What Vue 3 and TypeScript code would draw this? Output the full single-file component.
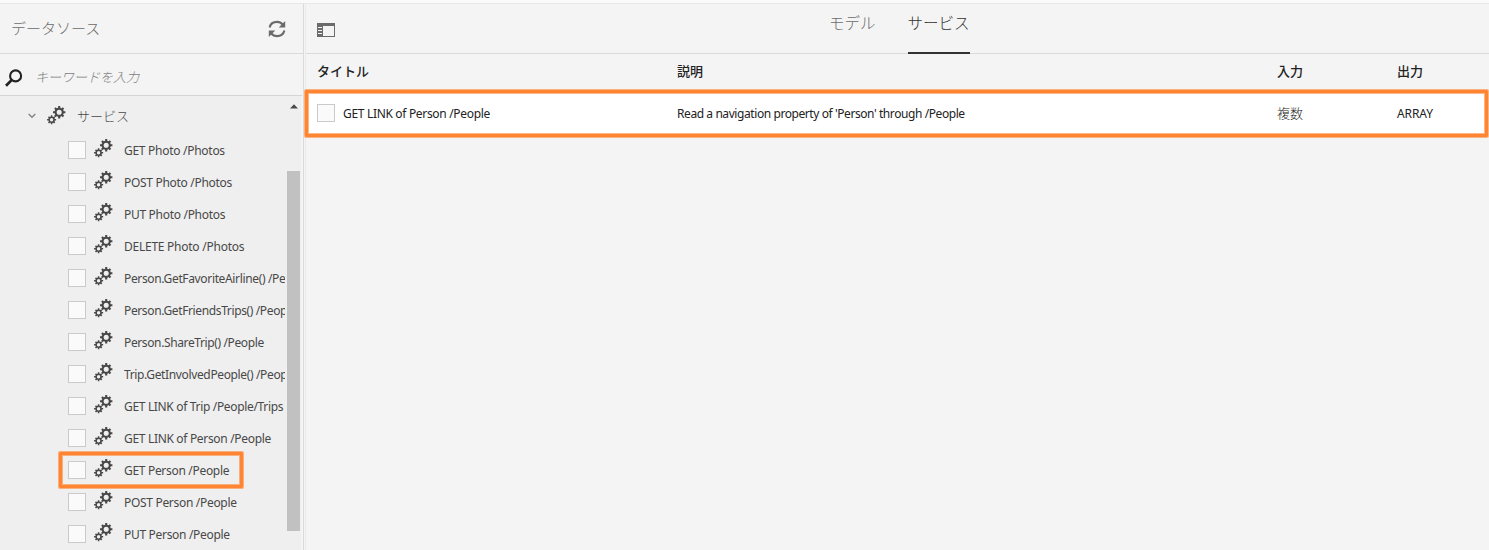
<script setup lang="ts">
interface ServiceItem {
  label: string
  tracking: number
  marked?: boolean
}

const services: ServiceItem[] = [
  { label: 'GET Photo /Photos', tracking: -0.28 },
  { label: 'POST Photo /Photos', tracking: -0.3 },
  { label: 'PUT Photo /Photos', tracking: -0.3 },
  { label: 'DELETE Photo /Photos', tracking: -0.25 },
  { label: 'Person.GetFavoriteAirline() /People', tracking: -0.35 },
  { label: 'Person.GetFriendsTrips() /People', tracking: -0.37 },
  { label: 'Person.ShareTrip() /People', tracking: -0.38 },
  { label: 'Trip.GetInvolvedPeople() /People', tracking: -0.36 },
  { label: 'GET LINK of Trip /People/Trips', tracking: -0.33 },
  { label: 'GET LINK of Person /People', tracking: -0.32 },
  { label: 'GET Person /People', tracking: -0.31, marked: true },
  { label: 'POST Person /People', tracking: -0.31 },
  { label: 'PUT Person /People', tracking: -0.31 },
]
</script>

<template>
  <div class="app">
    <svg class="defs" width="0" height="0" aria-hidden="true">
      <symbol id="gears" viewBox="0 0 20 20">
        <g fill="none" stroke="#484848">
          <circle cx="12.2" cy="6.3" r="3.6" stroke-width="2.1" />
          <path
            stroke-width="2.1"
            d="M12.2 2.8V.1M12.2 9.8v2.700M8.700 6.300H6M15.700 6.300h2.700M9.700 3.800 7.900 2M14.700 8.800l1.800 1.800M9.700 8.800l-1.800 1.800M14.700 3.800 16.500 2"
          />
          <circle cx="4.600" cy="13.800" r="2.450" stroke-width="1.500" />
          <path
            stroke-width="1.500"
            d="M4.600 11.500V9.300M4.600 16.100v2.200M2.300 13.800H.1M6.900 13.800h2.200M3 12.200l-1.500-1.500M6.200 15.400l1.500 1.500M3 15.400l-1.500 1.500M6.200 12.200l1.500-1.500"
          />
        </g>
      </symbol>
    </svg>

    <div class="strip"></div>
    <div class="body">
      <aside class="side">
        <header class="side-head">
          <span class="side-title">データソース</span>
          <svg class="refresh" width="18" height="18" viewBox="0 0 18 18">
            <g fill="none" stroke="#6b6b6b" stroke-width="2.1">
              <path d="M1.600 7.400C2.400 4 5.400 1.900 9 1.900c2.400 0 4.300.9 5.700 2.600" />
              <path d="M16.400 10.600c-.8 3.400-3.800 5.500-7.400 5.500-2.400 0-4.300-.9-5.700-2.600" />
            </g>
            <path fill="#6b6b6b" d="M17.200 1v6.400h-6.500zM.8 17v-6.400h6.500z" />
          </svg>
        </header>
        <div class="search">
          <svg width="18" height="18" viewBox="0 0 18 18">
            <circle cx="10.600" cy="6.900" r="5.500" fill="none" stroke="#222" stroke-width="2.100" />
            <path d="M6.800 10.900 1 16.800" fill="none" stroke="#222" stroke-width="2.700" />
          </svg>
          <span class="placeholder">キーワードを入力</span>
        </div>
        <div class="tree">
          <div class="list">
            <div class="root">
              <svg class="chev" width="8" height="6" viewBox="0 0 8 6">
                <path d="M.7 1 4 4.300 7.300 1" fill="none" stroke="#858585" stroke-width="1.400" />
              </svg>
              <svg class="gear" width="20" height="20"><use href="#gears" /></svg>
              <span class="root-label">サービス</span>
            </div>
            <div v-for="s in services" :key="s.label" class="item">
              <span class="box"></span>
              <svg class="gear" width="20" height="20"><use href="#gears" /></svg>
              <span class="label" :style="{ letterSpacing: s.tracking + 'px' }">{{ s.label }}</span>
              <span v-if="s.marked" class="mark mark-item"></span>
            </div>
          </div>
          <div class="scroll">
            <svg width="8" height="5" viewBox="0 0 8 5"><path d="M0 4.500 4 .3l4 4.200z" fill="#484848" /></svg>
            <div class="thumb"></div>
          </div>
        </div>
      </aside>

      <main class="main">
        <header class="main-head">
          <svg class="rail" width="18" height="14" viewBox="0 0 18 14">
            <path fill="#6b6b6b" fill-rule="evenodd" d="M0 0h18v14H0zM6 3v10h11V3z" />
            <path fill="#f4f4f4" d="M1 4h4v1H1zM1 7h4v1H1zM1 10h4v1H1z" />
          </svg>
          <nav class="tabs">
            <span class="tab">モデル</span>
            <span class="tab active">サービス</span>
          </nav>
        </header>
        <div class="cols thead">
          <span>タイトル</span>
          <span>説明</span>
          <span>入力</span>
          <span>出力</span>
        </div>
        <div class="cols row">
          <span class="cell-title"><span class="box"></span><span class="t1">GET LINK of Person /People</span></span>
          <span class="t2">Read a navigation property of 'Person' through /People</span>
          <span class="multi">複数</span>
          <span class="t3">ARRAY</span>
          <span class="mark mark-row"></span>
        </div>
      </main>
    </div>
  </div>
</template>

<style>
body {
  margin: 0;
  overflow: hidden;
}
</style>

<style scoped>
.app {
  width: 1489px;
  height: 550px;
  display: flex;
  flex-direction: column;
  overflow: hidden;
  background: #f4f4f4;
  color: #323232;
  font-family: 'Noto Sans', 'Noto Sans CJK JP', sans-serif;
  font-size: 12px;
}
.defs {
  position: absolute;
}
.strip {
  height: 3px;
  flex: none;
  background: #fafafa;
  border-bottom: 1px solid #e7e7e7;
}
.body {
  flex: 1;
  display: flex;
  min-height: 0;
}
.side {
  width: 303px;
  flex: none;
  display: flex;
  flex-direction: column;
  border-right: 1px solid #dadada;
}
.side-head {
  height: 49px;
  flex: none;
  display: flex;
  align-items: center;
  justify-content: space-between;
  padding: 0 17px 0 11px;
  border-bottom: 1px solid #dadada;
}
.side-title {
  font-family: 'Noto Sans CJK JP', sans-serif;
  font-size: 15px;
  font-weight: 300;
  color: #6b6b6b;
  padding-bottom: 2px;
}
.search {
  box-sizing: border-box;
  height: 42px;
  flex: none;
  display: flex;
  align-items: center;
  gap: 12px;
  padding: 4px 0 0 5px;
  width: 302px;
  border-bottom: 1px solid #d5d5d5;
}
.search svg {
  margin-top: 2px;
}
.placeholder {
  font-family: 'Noto Sans CJK JP', sans-serif;
  font-size: 13px;
  font-weight: 300;
  font-style: italic;
  color: #7d7d7d;
}
.tree {
  flex: 1;
  min-height: 0;
  width: 301px;
  display: flex;
  background: #efefef;
}
.list {
  width: 286px;
  flex: none;
  display: flex;
  flex-direction: column;
}
.root {
  height: 38px;
  flex: none;
  display: flex;
  align-items: center;
  padding-left: 28px;
}
.chev {
  margin: 1px 11px 0 0;
}
.gear {
  flex: none;
}
.root .gear {
  margin: 2px 10px 0 0;
}
.root-label {
  font-family: 'Noto Sans CJK JP', sans-serif;
  font-size: 13px;
  font-weight: 300;
  color: #484848;
}
.item {
  position: relative;
  height: 32px;
  flex: none;
  display: flex;
  align-items: center;
  padding-left: 68px;
}
.box {
  box-sizing: border-box;
  width: 18px;
  height: 18px;
  flex: none;
  border: 1px solid #cacaca;
  background: #fafafa;
}
.item .gear {
  margin: 0 10px 2px 8px;
}
.label {
  width: 161px;
  overflow: hidden;
  white-space: nowrap;
  color: #484848;
}
.scroll {
  width: 15px;
  display: flex;
  flex-direction: column;
  align-items: center;
  padding-top: 8px;
}
.scroll svg {
  flex: none;
}
.thumb {
  width: 13px;
  height: 360px;
  flex: none;
  margin-top: 62px;
  background: #c1c1c1;
}
.main {
  flex: 1;
  min-width: 0;
  margin-left: 1px;
  border-left: 1px solid #ebebeb;
}
.main-head {
  position: relative;
  height: 49px;
  display: flex;
  align-items: center;
  border-bottom: 1px solid #dadada;
}
.rail {
  margin: 3px 0 0 11px;
}
.tabs {
  display: flex;
  gap: 32px;
  height: 50px;
  align-self: flex-start;
  margin-left: 494px;
}
.tab {
  box-sizing: border-box;
  height: 50px;
  padding-top: 6px;
  font-family: 'Noto Sans CJK JP', sans-serif;
  font-size: 15.500px;
  line-height: 24px;
  font-weight: 300;
  color: #6b6b6b;
  white-space: nowrap;
}
.tab.active {
  color: #323232;
  border-bottom: 2px solid #323232;
}
.cols {
  display: grid;
  grid-template-columns: 360px 600px 120px 1fr;
  align-items: center;
  padding-left: 11px;
}
.thead {
  box-sizing: border-box;
  height: 37px;
  padding-bottom: 4px;
  font-family: 'Noto Sans CJK JP', sans-serif;
  font-size: 13px;
  font-weight: 500;
  color: #222;
}
.row {
  position: relative;
  height: 45px;
  background: #fff;
  color: #222;
  white-space: nowrap;
}
.cell-title {
  display: flex;
  align-items: center;
  gap: 8px;
}
.cell-title .box {
  margin-bottom: 1px;
}
.multi {
  font-family: 'Noto Sans CJK JP', sans-serif;
  font-size: 13px;
  font-weight: 300;
  padding-bottom: 3px;
}
.t1 {
  letter-spacing: -0.32px;
}
.t2 {
  letter-spacing: -0.42px;
}
.t3 {
  letter-spacing: -0.1px;
}
.mark {
  position: absolute;
  box-sizing: border-box;
  border: 3px solid #ff8533;
  border-radius: 1px;
  box-shadow:
    0 0 0 1px rgba(255, 133, 51, 0.6),
    inset 0 0 0 1px rgba(255, 133, 51, 0.6);
}
.mark-item {
  left: 59px;
  top: -2px;
  width: 184px;
  height: 36px;
}
.mark-row {
  left: -1px;
  right: 1px;
  top: -1px;
  bottom: -1px;
}
</style>
